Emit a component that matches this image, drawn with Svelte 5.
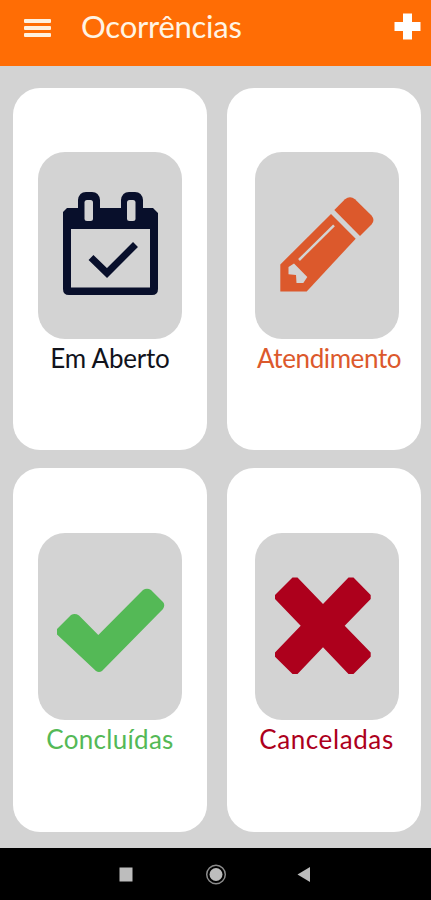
<script>

    let title = "Ocorrências"

    // one entry per card, the icon name picks the drawing below
    let cards = [
        { name: "aberto", label: "Em Aberto" },
        { name: "atendimento", label: "Atendimento" },
        { name: "concluidas", label: "Concluídas" },
        { name: "canceladas", label: "Canceladas" }
    ]

</script>

<div class="screen">
    <header>
        <button class="menu" aria-label="Menu">
            <span></span>
            <span></span>
            <span></span>
        </button>
        <h1>{title}</h1>
        <button class="add" aria-label="Adicionar">
            <svg width="27" height="27" viewBox="0 0 27 27">
                <path d="M9 0.5h9v8.500h8.500v9h-8.500v8.500h-9v-8.500h-8.500v-9h8.500z" />
            </svg>
        </button>
    </header>

    <main>
        {#each cards as card}
            <div class="card {card.name}">
                <div class="tile">
                    <svg width="144" height="187" viewBox="0 0 144 187">
                        {#if card.name == "aberto"}
                            <path fill-rule="evenodd" d="M29 56H40V48Q41 40 48 40H54Q61 40 62 48V56H83V48Q84 40 91 40H97Q104 40 105 48V56H115L120 61V137Q120 143 114 143H31Q25 143 25 137V60ZM33 77V135.500H112V77Z" />
                            <rect class="hole" x="46.500" y="48" width="8.500" height="21" rx="2.500" />
                            <rect class="hole" x="89" y="48" width="8.500" height="21" rx="2.500" />
                            <path class="tick" d="M53 105.500L69 121L97.500 92.500" />
                        {:else if card.name == "atendimento"}
                            <path d="M79.300 58L90 47.300Q95 43 100 47.300L116.500 63.500Q120.500 68.500 116.500 72.500L105 84Z" />
                            <path d="M76 62L100.700 86.700L51.700 139.500H25.300V112.500Z" />
                            <path class="shine" d="M44 108L79 73.300" />
                            <path class="hole" d="M33.500 115L39 111.500L52.300 125L48.300 131H41.500L41 123L33.500 122.300Z" />
                        {:else if card.name == "concluidas"}
                            <path d="M19 96L33 82Q37 80 41 82.500L60.300 102L105 57Q109 54.500 113 57L125 69Q127.500 72 125 76L64 138Q61 140 58 138L19 101.500Z" />
                        {:else}
                            <path d="M20 62L37.500 44.500H42.500L68 71L93.500 44.500H98.500L115.700 62V66L89.700 92.700L115.700 119.500V123.700L98.500 141H93.500L68 114.300L42.500 141H37.500L20 123.700V119.500L45.700 92.700L20 66Z" />
                        {/if}
                    </svg>
                </div>
                <p>{card.label}</p>
            </div>
        {/each}
    </main>

    <nav>
        <svg width="431" height="52" viewBox="0 0 431 52">
            <rect x="119.500" y="19.500" width="13" height="14" />
            <circle cx="216" cy="26.500" r="6.500" />
            <circle class="ring" cx="216" cy="26.500" r="9.300" />
            <path d="M297.500 26.500L310 19V34Z" />
        </svg>
    </nav>
</div>

<style>
    :global(body) {
        margin: 0;
        background: #d3d3d3;
    }
    .screen {
        display: flex;
        flex-direction: column;
        width: 431px;
        height: 900px;
        background: #d3d3d3;
        font-family: Lato, "Open Sans", sans-serif;
        overflow: hidden;
    }
    header {
        display: flex;
        align-items: flex-start;
        height: 66px;
        box-sizing: border-box;
        padding: 0 10px 0 24px;
        background: #ff6d05;
        color: #fff4e4;
    }
    button {
        border: 0;
        padding: 0;
        background: none;
    }
    .menu {
        display: flex;
        flex-direction: column;
        gap: 3px;
        width: 27px;
        margin-top: 19px;
    }
    .menu span {
        height: 4px;
        border-radius: 1px;
        background: #fff1e0;
    }
    h1 {
        flex: 1;
        margin: 6px 0 0 30px;
        font-size: 31px;
        line-height: 40px;
        font-weight: 400;
        letter-spacing: -0.25px;
        white-space: nowrap;
    }
    .add {
        height: 27px;
        margin-top: 13px;
    }
    .add svg {
        display: block;
        fill: white;
    }
    main {
        display: grid;
        grid-template-columns: 194px 194px;
        grid-template-rows: 362px 364px;
        column-gap: 20px;
        row-gap: 18px;
        height: 782px;
        box-sizing: border-box;
        padding: 22px 10px 16px 13px;
    }
    .card {
        box-sizing: border-box;
        padding: 64px 0 0 25px;
        border-radius: 27px;
        background: white;
        color: #080f2b;
    }
    .card:nth-child(even) {
        padding-left: 28px;
    }
    .card:nth-child(n+3) {
        padding-top: 65px;
    }
    .tile {
        width: 144px;
        height: 187px;
        border-radius: 27px;
        background: #d3d3d3;
    }
    .tile svg {
        display: block;
        fill: currentColor;
    }
    .tile .hole {
        fill: #d3d3d3;
    }
    .tile .tick {
        fill: none;
        stroke: currentColor;
        stroke-width: 7;
    }
    .tile .shine {
        stroke: #d3d3d3;
        stroke-width: 2.5;
    }
    .card p {
        width: 144px;
        margin: 3px 0 0;
        display: flex;
        justify-content: center;
        font-size: 26px;
        line-height: 32px;
        letter-spacing: -0.2px;
        white-space: nowrap;
    }
    .card.aberto p {
        color: #11131c;
    }
    .card.atendimento {
        color: #dc592c;
    }
    .card.atendimento p {
        width: 148px;
        letter-spacing: -0.4px;
    }
    .card.concluidas {
        color: #54b956;
    }
    .card.concluidas p {
        letter-spacing: 0.3px;
    }
    .card.canceladas {
        color: #ad001c;
    }
    .card.canceladas p {
        width: 143px;
        letter-spacing: 0.6px;
    }
    nav {
        height: 52px;
        background: black;
    }
    nav svg {
        display: block;
        fill: #bdbdbd;
    }
    nav .ring {
        fill: none;
        stroke: #8b8b8b;
        stroke-width: 1.5;
    }
</style>
